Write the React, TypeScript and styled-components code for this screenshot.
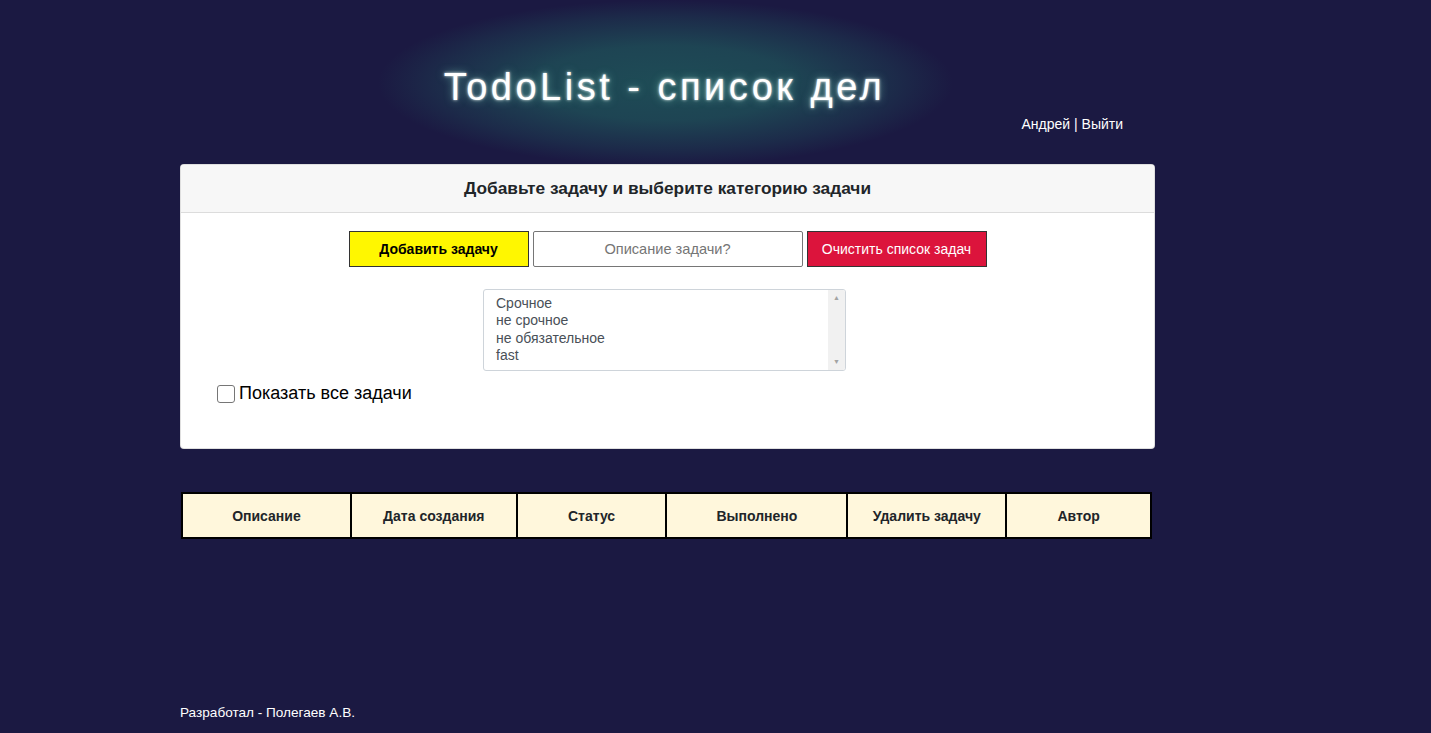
import React from "react";
import styled, { createGlobalStyle } from "styled-components";

const Global = createGlobalStyle`
  html, body { margin: 0; padding: 0; background: #1b1942; }
  body { font-family: "Liberation Sans", Arial, sans-serif; min-height: 733px; }
`;

const Page = styled.div`
  display: flex;
  flex-direction: column;
  min-height: 733px;
  padding-left: 180px;
  box-sizing: border-box;
`;

const Column = styled.div`
  width: 975px;
  display: flex;
  flex-direction: column;
`;

const Header = styled.header`
  display: flex;
  flex-direction: column;
  height: 164px;
`;

const Title = styled.h1`
  position: relative;
  z-index: 0;
  width: fit-content;
  margin: 64px auto 0;
  padding-right: 6px;
  font-family: "Liberation Sans", Arial, sans-serif;
  font-weight: 400;
  font-size: 38px;
  line-height: 46px;
  letter-spacing: 3.5px;
  color: #fff;
  text-shadow: 0 0 3px rgba(255,255,255,0.9), 0 0 8px rgba(160,255,230,0.5);
  &::before {
    content: "";
    position: absolute;
    z-index: -1;
    top: -64px;
    bottom: -56px;
    left: -66px;
    right: -62px;
    background: radial-gradient(ellipse closest-side, rgba(32,100,96,0.68) 0%, rgba(32,100,96,0.58) 45%, rgba(32,95,96,0.25) 80%, rgba(27,25,66,0) 100%);
  }
`;

const UserRow = styled.div`
  text-align: right;
  padding-right: 32px;
  margin-top: 6px;
  font-size: 14px;
  line-height: 16px;
  color: #fff;
`;

const Card = styled.section`
  background: #fff;
  border-radius: 4px;
  border: 1px solid rgba(0,0,0,0.125);
  overflow: hidden;
  height: 285px;
  box-sizing: border-box;
`;

const CardHeader = styled.div`
  background: #f7f7f7;
  border-bottom: 1px solid #dcdcdc;
  height: 48px;
  box-sizing: border-box;
  display: flex;
  align-items: center;
  justify-content: center;
  font-weight: 700;
  font-size: 17.3px;
  color: #212529;
`;

const CardBody = styled.div`
  padding: 18px 36px 0;
  display: flex;
  flex-direction: column;
`;

const Controls = styled.div`
  display: flex;
  justify-content: center;
  gap: 4px;
`;

const Button = styled.button<{ $tone: "yellow" | "red" }>`
  width: 180px;
  height: 36px;
  border: 1px solid #333;
  font-family: "Liberation Sans", Arial, sans-serif;
  font-size: 14px;
  font-weight: ${p => (p.$tone === "yellow" ? 700 : 400)};
  background: ${p => (p.$tone === "yellow" ? "#fff700" : "#dc143c")};
  color: ${p => (p.$tone === "yellow" ? "#000" : "#fff")};
  padding: 0;
`;

const Input = styled.input`
  width: 270px;
  height: 36px;
  box-sizing: border-box;
  border: 1px solid #767676;
  border-radius: 2px;
  text-align: center;
  font-family: "Liberation Sans", Arial, sans-serif;
  font-size: 14.6px;
  &::placeholder { color: #757575; }
`;

const SelectRow = styled.div`
  display: flex;
  justify-content: center;
  margin-top: 22px;
  padding-right: 6px;
`;

const ListBox = styled.div`
  width: 363px;
  height: 82px;
  box-sizing: border-box;
  border: 1px solid #ced4da;
  border-radius: 3px;
  display: flex;
  overflow: hidden;
`;

const Options = styled.div`
  flex: 1;
  padding: 5px 12px;
  font-size: 14px;
  line-height: 17.4px;
  color: #495057;
`;

const ScrollBar = styled.div`
  width: 17px;
  background: #f1f1f1;
  display: flex;
  flex-direction: column;
  justify-content: space-between;
  align-items: center;
  padding: 4px 0;
  color: #a3a3a3;
  font-size: 7px;
  line-height: 8px;
`;

const CheckRow = styled.label`
  display: flex;
  align-items: center;
  gap: 4px;
  margin-top: 12px;
  font-size: 18px;
  color: #000;
`;

const Box = styled.span`
  width: 16px;
  height: 16px;
  border: 1px solid #767676;
  border-radius: 3px;
  background: #fff;
  display: inline-block;
`;

const Table = styled.table`
  margin-top: 43px;
  margin-left: 1px;
  width: 971px;
  border-collapse: collapse;
  border: 2px solid #000;
`;

const Th = styled.th<{ $w: number }>`
  width: ${p => p.$w}px;
  height: 43px;
  background: #fff7dc;
  border: 2px solid #000;
  font-size: 14px;
  font-weight: 700;
  color: #212529;
  padding: 0;
`;

const Footer = styled.footer`
  margin-top: auto;
  padding-bottom: 13px;
  font-size: 13.6px;
  color: #fff;
`;

const cols: [string, number][] = [
  ["Описание", 169],
  ["Дата создания", 166],
  ["Статус", 150],
  ["Выполнено", 181],
  ["Удалить задачу", 159],
  ["Автор", 145],
];

export default function App() {
  return (
    <>
      <Global />
      <Page>
        <Column>
          <Header>
            <Title>TodoList - список дел</Title>
            <UserRow>Андрей | Выйти</UserRow>
          </Header>
          <Card>
            <CardHeader>Добавьте задачу и выберите категорию задачи</CardHeader>
            <CardBody>
              <Controls>
                <Button $tone="yellow">Добавить задачу</Button>
                <Input placeholder="Описание задачи?" />
                <Button $tone="red">Очистить список задач</Button>
              </Controls>
              <SelectRow>
                <ListBox>
                  <Options>
                    <div>Срочное</div>
                    <div>не срочное</div>
                    <div>не обязательное</div>
                    <div>fast</div>
                  </Options>
                  <ScrollBar>
                    <span>▲</span>
                    <span>▼</span>
                  </ScrollBar>
                </ListBox>
              </SelectRow>
              <CheckRow>
                <Box />
                Показать все задачи
              </CheckRow>
            </CardBody>
          </Card>
          <Table>
            <thead>
              <tr>
                {cols.map(([t, w]) => (
                  <Th key={t} $w={w}>{t}</Th>
                ))}
              </tr>
            </thead>
          </Table>
        </Column>
        <Footer>Разработал - Полегаев А.В.</Footer>
      </Page>
    </>
  );
}
